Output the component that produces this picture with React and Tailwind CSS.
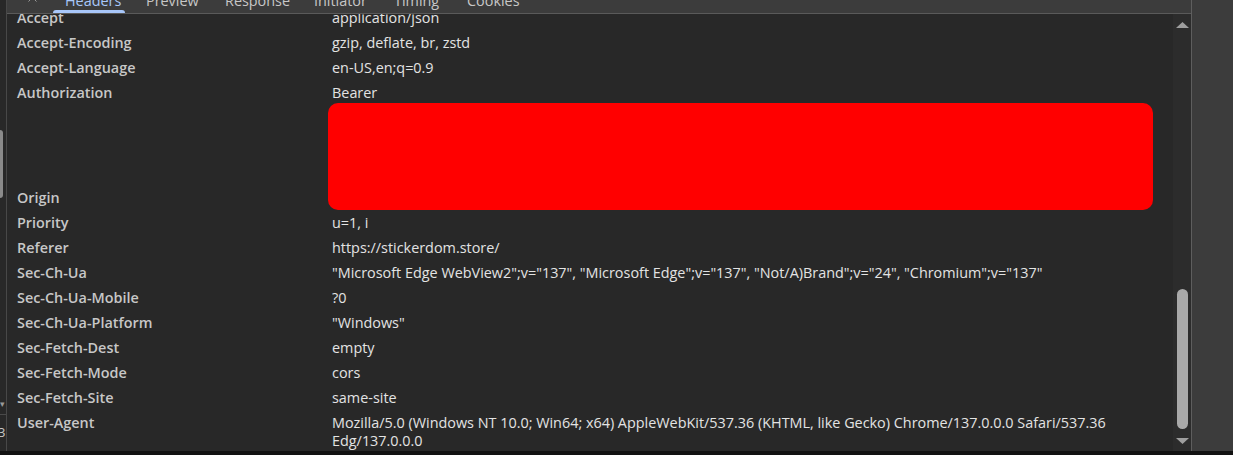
import { X } from "lucide-react";

const rows = [
  ["Accept", "application/json"],
  ["Accept-Encoding", "gzip, deflate, br, zstd"],
  ["Accept-Language", "en-US,en;q=0.9"],
  ["Authorization", "Bearer", "auth"],
  ["Origin", "https://stickerdom.store", "hidden"],
  ["Priority", "u=1, i"],
  ["Referer", "https://stickerdom.store/"],
  ["Sec-Ch-Ua", "\"Microsoft Edge WebView2\";v=\"137\", \"Microsoft Edge\";v=\"137\", \"Not/A)Brand\";v=\"24\", \"Chromium\";v=\"137\""],
  ["Sec-Ch-Ua-Mobile", "?0"],
  ["Sec-Ch-Ua-Platform", "\"Windows\""],
  ["Sec-Fetch-Dest", "empty"],
  ["Sec-Fetch-Mode", "cors"],
  ["Sec-Fetch-Site", "same-site"],
  ["User-Agent", "Mozilla/5.0 (Windows NT 10.0; Win64; x64) AppleWebKit/537.36 (KHTML, like Gecko) Chrome/137.0.0.0 Safari/537.36 Edg/137.0.0.0"],
];

const tabs = [
  { label: "Headers", w: "w-[81px]", active: true },
  { label: "Preview", w: "w-[79px]" },
  { label: "Response", w: "w-[89px]" },
  { label: "Initiator", w: "w-[80px]" },
  { label: "Timing", w: "w-[73px]" },
  { label: "Cookies", w: "w-[80px]" },
];

export default function App() {
  return (
    <div className="w-[1233px] h-[455px] flex flex-col overflow-hidden bg-[#3c3c3c] text-[14.4px] font-['Open_Sans','Liberation_Sans',sans-serif]">
      <div className="flex flex-1 min-h-0">
        {/* left sliver of neighbouring panel */}
        <div className="w-[7px] shrink-0 bg-[#282828] border-r border-[#484848] flex flex-col overflow-hidden">
          <div className="mt-[130px] w-[3px] h-[68px] rounded-r bg-[#8a8a8a]" />
          <div className="mt-[201px] text-[9px] leading-none text-[#9a9a9a]">▾</div>
          <div className="mt-[6px] h-px w-full bg-[#4a4a4a]" />
          <div className="mt-[8px] -ml-[2px] text-[13px] leading-[18px] text-[#c7c7c7] whitespace-nowrap">3.</div>
        </div>

        {/* headers panel */}
        <div className="w-[1185px] shrink-0 flex flex-col border-r border-[#5e5e5e]">
          <div className="relative z-10 h-[14px] shrink-0 flex items-end overflow-hidden bg-[#3c3c3c] border-b border-[#5a5a5a]">
            <div className="w-[46px] shrink-0 flex justify-end pr-[13px] mb-[8px]">
              <X size={15} strokeWidth={1.5} className="text-[#a0a0a0]" />
            </div>
            {tabs.map((t) => (
              <div key={t.label} className={`${t.w} shrink-0 relative h-full flex items-end`}>
                <span className={`pl-[12px] mb-[3px] leading-[18px] whitespace-nowrap ${t.active ? "text-[#a8c7fa]" : "text-[#c7c7c7]"}`}>
                  {t.label}
                </span>
                {t.active && <div className="absolute left-0 w-[72px] bottom-0 h-[3px] rounded-t bg-[#a8c7fa]" />}
              </div>
            ))}
          </div>

          <div className="flex flex-1 min-h-0">
            <div className="flex-1 bg-[#282828] overflow-hidden">
              <div className="-mt-[9px]">
                {rows.map(([k, v, kind]) => (
                  <div
                    key={k}
                    className={`flex pl-[10px] pt-[4px] pb-[3px] leading-[18px] ${kind === "auth" ? "h-[105px]" : ""}`}
                  >
                    <div className="w-[315px] shrink-0 font-semibold text-[#c7c7c7]">{k}</div>
                    <div className={`relative w-[825px] text-[#e3e3e3] ${kind === "hidden" ? "invisible" : ""}`}>
                      {v}
                      {kind === "auth" && (
                        <div className="absolute left-[-4px] top-[19px] w-[825px] h-[107px] rounded-[10px] bg-[#ff0000]" />
                      )}
                    </div>
                  </div>
                ))}
              </div>
            </div>

            {/* scrollbar */}
            <div className="w-[18px] shrink-0 bg-[#2c2c2c] flex flex-col items-center pt-[8px] pb-[7px]">
              <svg width="13" height="6" viewBox="0 0 13 6">
                <polygon points="6.5,0 13,6 0,6" fill="#9e9e9e" />
              </svg>
              <div className="mt-auto w-[11px] h-[140px] rounded-full bg-[#a9a9a9]" />
              <svg width="13" height="6" viewBox="0 0 13 6" className="mt-[9px]">
                <polygon points="0,0 13,0 6.5,6" fill="#9e9e9e" />
              </svg>
            </div>
          </div>
        </div>

        <div className="flex-1 bg-[#3c3c3c]" />
      </div>
      <div className="h-[4px] shrink-0 bg-[#121212]" />
    </div>
  );
}
